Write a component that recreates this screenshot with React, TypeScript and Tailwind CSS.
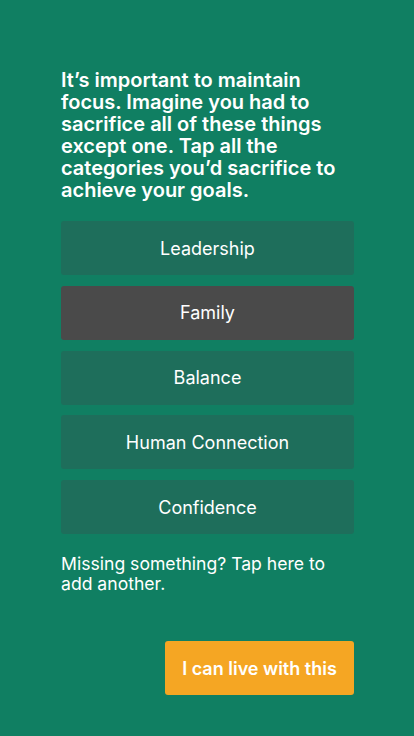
import React from 'react';

const categories = ['Leadership', 'Family', 'Balance', 'Human Connection', 'Confidence'];

const App: React.FC = () => {
  const selected = 'Family';
  return (
    <div
      className="min-h-[736px] w-full bg-[#107f62] pl-[61px] pr-[60px] pt-[69px] text-white"
      style={{ fontFamily: 'Inter, "Noto Sans", sans-serif' }}
    >
      <h1 className="text-[20px] font-semibold leading-[22px]">
        It’s important to maintain focus. Imagine you had to sacrifice all of these things except one. Tap all the
        categories you’d sacrifice to achieve your goals.
      </h1>
      <div className="mt-[20px] flex flex-col gap-[10.75px]">
        {categories.map((c) => (
          <button
            key={c}
            className={
              'h-[54px] w-full rounded-[3px] text-[18px] ' +
              (c === selected ? 'bg-[#4a4a4a]' : 'bg-[#1e6e5b]')
            }
          >
            {c}
          </button>
        ))}
      </div>
      <p className="mt-[20px] text-[17.6px] leading-[20px]">Missing something? Tap here to add another.</p>
      <div className="mt-[47px] flex justify-end">
        <button className="h-[54px] w-[189px] rounded-[3px] bg-[#f5a623] text-[18px] font-semibold">
          I can live with this
        </button>
      </div>
    </div>
  );
};

export default App;
